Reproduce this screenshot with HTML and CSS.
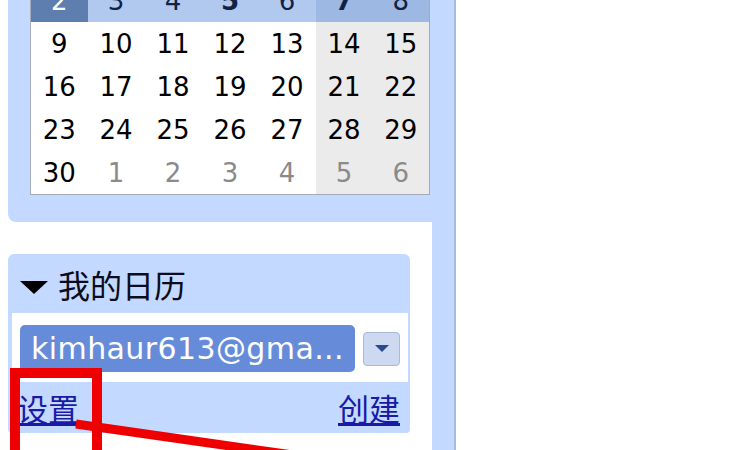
FILE: index.html
```html
<!DOCTYPE html>
<html lang="zh-CN">
<head>
  <meta charset="UTF-8">
  <title>日历</title>
  <link rel="stylesheet" href="styles.css">
</head>
<body>
  <div class="page">
    <div class="side">
      <!-- Mini month -->
      <div class="minical">
        <table class="month">
          <tr class="week-sel">
            <td class="day-sel">2</td><td>3</td><td>4</td><td class="bold">5</td><td>6</td><td class="we bold">7</td><td class="we">8</td>
          </tr>
          <tr><td>9</td><td>10</td><td>11</td><td>12</td><td>13</td><td class="we">14</td><td class="we">15</td></tr>
          <tr><td>16</td><td>17</td><td>18</td><td>19</td><td>20</td><td class="we">21</td><td class="we">22</td></tr>
          <tr><td>23</td><td>24</td><td>25</td><td>26</td><td>27</td><td class="we">28</td><td class="we">29</td></tr>
          <tr><td>30</td><td class="other">1</td><td class="other">2</td><td class="other">3</td><td class="other">4</td><td class="we other">5</td><td class="we other">6</td></tr>
        </table>
      </div>

      <!-- My calendars -->
      <div class="mycals">
        <div class="mycals-head">
          <span class="caret"></span>
          <span>我的日历</span>
        </div>
        <div class="cal-list">
          <div class="cal-chip">kimhaur613@gma...</div>
          <div class="cal-menu"><span class="menu-arrow"></span></div>
        </div>
        <div class="cal-links">
          <a href="#">设置</a>
          <a href="#">创建</a>
        </div>
      </div>
    </div>
    <div class="strip"></div>
  </div>

  <!-- red marker pointing at the settings link -->
  <svg class="marker" width="730" height="450" viewBox="0 0 730 450">
    <rect x="15" y="373" width="82" height="100" fill="none" stroke="#ee0000" stroke-width="10"/>
    <line x1="76" y1="424" x2="300" y2="456" stroke="#ee0000" stroke-width="9"/>
  </svg>
</body>
</html>
```

FILE: styles.css
```css
body {
  margin: 0;
  background: #fff;
  font-family: "DejaVu Sans", sans-serif;
  overflow: hidden;
}

.page {
  display: flex;
  padding-left: 8px;
  height: 450px;
}

.side {
  width: 424px;
}

.strip {
  width: 22px;
  background: #c3d9ff;
  border-right: 2px solid #a4bade;
}

/* mini month */
.minical {
  margin-top: -21px;
  padding: 0 2px 27px 22px;
  background: #c3d9ff;
  border-bottom-left-radius: 8px;
}

.month {
  width: 400px;
  table-layout: fixed;
  border-collapse: collapse;
  border: 1px solid #a3abb8;
  border-top: none;
  background: #fff;
}

.month td {
  height: 43px;
  padding: 0;
  text-align: center;
  font-size: 26px;
  color: #000;
}

.month td.we {
  background: #ebebeb;
}

.month td.other {
  color: #8a8a8a;
}

.week-sel td {
  background: #b2c9ef;
  color: #112244;
}

.week-sel td.we {
  background: #9db8e2;
}

.week-sel td.day-sel {
  background: #5d7eaf;
  color: #fff;
}

.bold {
  font-weight: bold;
}

/* my calendars */
.mycals {
  margin: 32px 22px 0 0;
  height: 179px;
  background: #c3d9ff;
  border-radius: 6px 6px 4px 4px;
}

.mycals-head {
  height: 59px;
  display: flex;
  align-items: center;
  padding: 0 0 0 12px;
  gap: 10px;
  font-family: "Noto Sans CJK SC", sans-serif;
  font-size: 32px;
  color: #0c0c20;
  line-height: 1;
}

.caret {
  width: 0;
  height: 0;
  border-left: 14px solid transparent;
  border-right: 14px solid transparent;
  border-top: 13px solid #000;
  margin-top: 8px;
}

.cal-list {
  margin: 0 2px 0 4px;
  padding: 12px 8px 10px 8px;
  background: #fff;
  display: flex;
  align-items: center;
  gap: 8px;
}

.cal-chip {
  width: 335px;
  height: 47px;
  box-sizing: border-box;
  padding-left: 11px;
  background: #668cd9;
  border-radius: 5px;
  color: #fff;
  font-size: 30px;
  letter-spacing: 0.4px;
  line-height: 47px;
  white-space: nowrap;
  overflow: hidden;
}

.cal-menu {
  width: 37px;
  height: 34px;
  box-sizing: border-box;
  background: #cdd9f1;
  border: 1px solid #a9b9d9;
  border-radius: 4px;
  display: flex;
  align-items: center;
  justify-content: center;
}

.menu-arrow {
  width: 0;
  height: 0;
  border-left: 7px solid transparent;
  border-right: 7px solid transparent;
  border-top: 7px solid #2b4a8e;
}

.cal-links {
  display: flex;
  justify-content: space-between;
  padding: 8px 10px 0 9px;
}

.cal-links a {
  font-family: "Noto Sans CJK SC", sans-serif;
  font-size: 31px;
  line-height: 36px;
  color: #1a1aa6;
  text-decoration: underline;
}

.marker {
  position: absolute;
  top: 0;
  left: 0;
  pointer-events: none;
}
```
